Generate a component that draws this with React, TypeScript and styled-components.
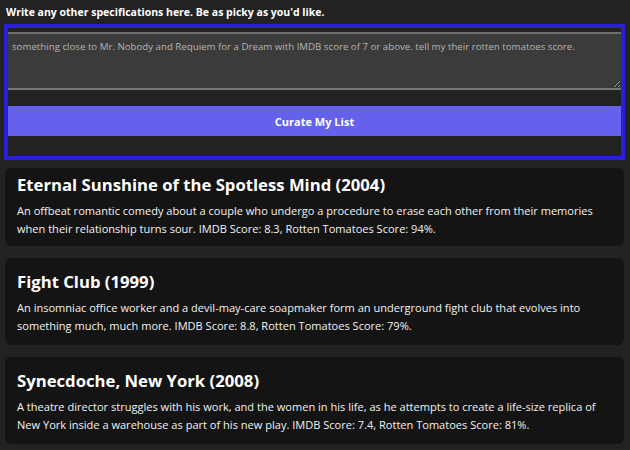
import React from 'react';
import styled, { createGlobalStyle } from 'styled-components';

interface Movie {
  title: string
  year: number
  blurb: string
}

const movies: Movie[] = [
  {
    title: 'Eternal Sunshine of the Spotless Mind',
    year: 2004,
    blurb: 'An offbeat romantic comedy about a couple who undergo a procedure to erase each other from their memories when their relationship turns sour. IMDB Score: 8.3, Rotten Tomatoes Score: 94%.',
  },
  {
    title: 'Fight Club',
    year: 1999,
    blurb: 'An insomniac office worker and a devil-may-care soapmaker form an underground fight club that evolves into something much, much more. IMDB Score: 8.8, Rotten Tomatoes Score: 79%.',
  },
  {
    title: 'Synecdoche, New York',
    year: 2008,
    blurb: 'A theatre director struggles with his work, and the women in his life, as he attempts to create a life-size replica of New York inside a warehouse as part of his new play. IMDB Score: 7.4, Rotten Tomatoes Score: 81%.',
  },
]

const prompt = 'something close to Mr. Nobody and Requiem for a Dream with IMDB score of 7 or above. tell my their rotten tomatoes score.'

const App: React.FC = () => {
  return (
    <Page>
      <GlobalStyle />
      <Label>Write any other specifications here. Be as picky as you'd like.</Label>
      <Form>
        <Prompt defaultValue={prompt} readOnly />
        <CurateButton type="button">Curate My List</CurateButton>
      </Form>
      <List>
        {movies.map((movie, i) => (
          <Card key={movie.title} $first={i === 0}>
            <CardTitle>{movie.title} ({movie.year})</CardTitle>
            <CardText>{movie.blurb}</CardText>
          </Card>
        ))}
      </List>
    </Page>
  )
}

export default App

const GlobalStyle = createGlobalStyle`
  html, body {
    margin: 0;
    padding: 0;
    background: #222222;
  }
  body {
    font-family: 'Open Sans', 'Noto Sans', sans-serif;
    color: #ffffff;
  }
`

const Page = styled.div`
  display: flex;
  flex-direction: column;
  height: 450px;
  overflow: hidden;
  padding: 0 5px 0 4px;
`

const Label = styled.div`
  height: 24px;
  display: flex;
  align-items: center;
  padding-left: 2px;
  font-size: 10.5px;
  font-weight: 700;
`

const Form = styled.div`
  display: flex;
  flex-direction: column;
  border: 4px solid #2b1fd6;
  padding: 4px 0 20px;
`

const Prompt = styled.textarea`
  height: 58px;
  box-sizing: border-box;
  margin: 0;
  padding: 6px 4px;
  background: #3b3b3b;
  border: none;
  border-top: 2px solid #6e6e6e;
  border-bottom: 2px solid #767676;
  color: #b4b4b4;
  font-family: 'Open Sans', 'Noto Sans', sans-serif;
  font-size: 9.7px;
  outline: none;
`

const CurateButton = styled.button`
  margin-top: 16px;
  height: 30px;
  border: none;
  background: #6461ec;
  color: #ffffff;
  font-family: 'Open Sans', 'Noto Sans', sans-serif;
  font-size: 11px;
  font-weight: 700;
`

const List = styled.div`
  display: flex;
  flex-direction: column;
  gap: 12px;
  padding: 8px 1px 0 1px;
`

const Card = styled.div<{ $first?: boolean }>`
  background: #141414;
  border-radius: 6px;
  padding: ${p => (p.$first ? '5px 12px 8px' : '12px 12px 10px')};
`

const CardTitle = styled.h3`
  margin: 0 0 5px;
  font-size: 16.7px;
  line-height: 24px;
  font-weight: 700;
`

const CardText = styled.p`
  margin: 0;
  font-size: 11.05px;
  line-height: 18px;
  color: #f2f2f2;
`
